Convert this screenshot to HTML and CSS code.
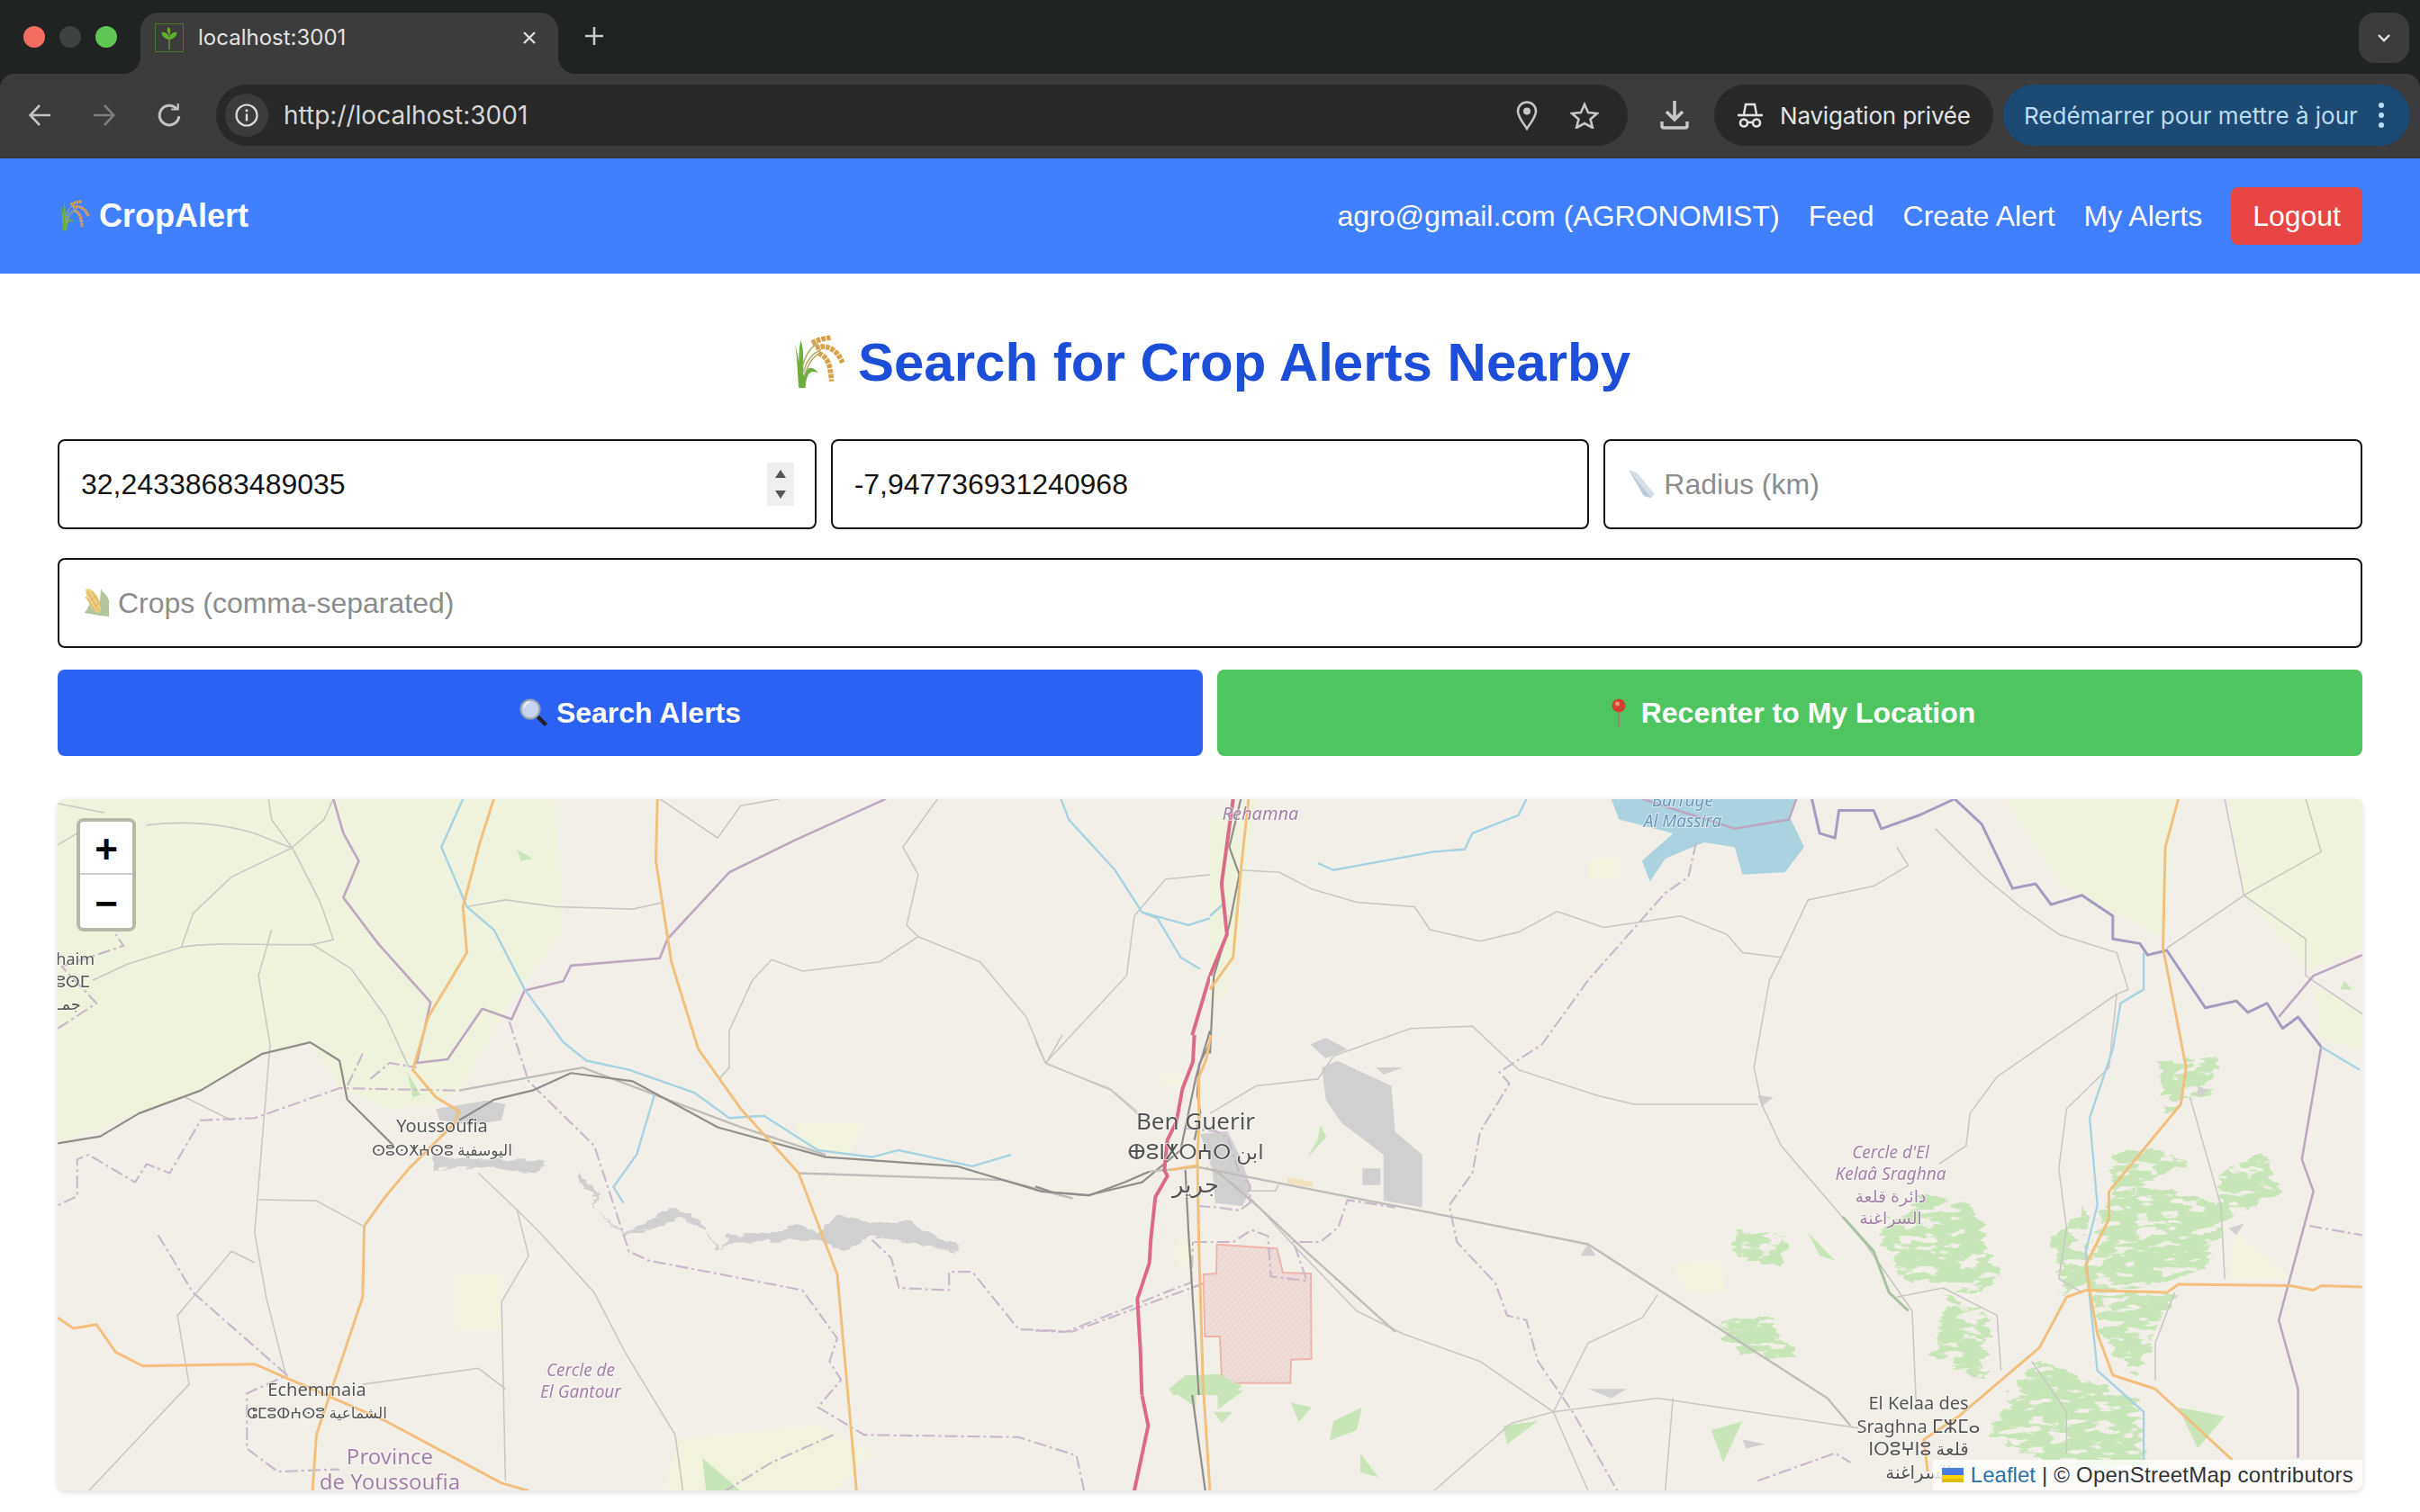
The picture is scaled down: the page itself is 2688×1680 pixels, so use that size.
FILE: index.html
```html
<!DOCTYPE html>
<html lang="en">
<head>
<meta charset="utf-8">
<title>CropAlert</title>
<link rel="stylesheet" href="styles.css">
</head>
<body>
<svg class="sprite" aria-hidden="true">
  <symbol id="rice" viewBox="0 0 60 60">
    <path d="M3 2C9 15 8 40 10 57L17 57C18 45 20 36 31 41C22 30 17 38 15 44C14 30 16 15 12 6C10 14 10 24 10 30C9 20 6 10 3 2Z" fill="#6fae3c"/>
    <path d="M14 34C16 24 22 14 30 9M15 40C18 28 24 20 34 16M16 44C19 34 24 24 32 20" fill="none" stroke="#b5b070" stroke-width="1.6"/>
    <path d="M24 9C31 5 38 4 44 3M28 14C36 11 44 13 50 19C53 22 55 26 57 30M31 20C37 22 41 27 43 34C44 40 45 45 45 50" fill="none" stroke="#d8a24c" stroke-width="5.5" stroke-dasharray="4.5 1"/>
  </symbol>
</svg>

<div class="browser">
  <div class="tabstrip">
    <div class="lights"><i class="light red"></i><i class="light grey"></i><i class="light green"></i></div>
    <div class="tab">
      <span class="favicon">
        <svg viewBox="0 0 32 32" width="30" height="30"><path d="M16 30V10" stroke="#6fae3c" stroke-width="1.2"/><path d="M16 18C9 17 7 13 7 9C12 9 16 12 16 18ZM16 18C23 17 25 13 25 9C20 9 16 12 16 18ZM16 12C13 9 13 6 15 3C18 6 18 9 16 12Z" fill="#5fb32c"/></svg>
      </span>
      <span class="tab-title">localhost:3001</span>
      <svg class="tab-close" viewBox="0 0 16 16" width="16" height="16"><path d="M2 2L14 14M14 2L2 14" stroke="#dcdcdc" stroke-width="2.4"/></svg>
    </div>
    <svg class="new-tab" viewBox="0 0 24 24" width="24" height="24"><path d="M12 2V22M2 12H22" stroke="#c8c8c8" stroke-width="2.6"/></svg>
    <div class="tab-menu"><svg viewBox="0 0 16 10" width="16" height="10"><path d="M2 2L8 8L14 2" fill="none" stroke="#e3e3e3" stroke-width="2.4"/></svg></div>
  </div>
  <div class="toolbar">
    <span class="navbtn"><svg viewBox="0 0 24 24" width="24" height="24"><path d="M24 12H2M12 1L1.500 12L12 23" fill="none" stroke="#c4c4c4" stroke-width="2.600"/></svg></span>
    <span class="navbtn"><svg viewBox="0 0 24 24" width="24" height="24"><path d="M0 12H22M12 1L22.500 12L12 23" fill="none" stroke="#7d7d7d" stroke-width="2.600"/></svg></span>
    <span class="navbtn"><svg viewBox="0 0 24 24" width="26" height="26"><path d="M20 6A10 10 0 1 0 22 13" fill="none" stroke="#c4c4c4" stroke-width="2.800"/><path d="M14 7H22V0H20V5H14Z" fill="#c4c4c4"/></svg></span>
    <div class="omnibox">
      <span class="chip"><svg viewBox="0 0 26 26" width="26" height="26"><circle cx="13" cy="13" r="11.500" fill="none" stroke="#dcdcdc" stroke-width="2.200"/><path d="M13 11.500V19.500" stroke="#dcdcdc" stroke-width="2.400"/><circle cx="13" cy="7.800" r="1.600" fill="#dcdcdc"/></svg></span>
      <span class="url">http://localhost:3001</span>
      <svg class="pin-ico" viewBox="0 0 24 34" width="24" height="34"><path d="M12 32C7 24 2 19 2 12.500A10 10 0 0 1 22 12.500C22 19 17 24 12 32Z" fill="none" stroke="#c6c6c6" stroke-width="2.600"/><circle cx="12" cy="12.500" r="4" fill="#c6c6c6"/></svg>
      <svg class="star-ico" viewBox="0 0 32 30" width="32" height="30"><path d="M16 3L20 12L30 13L22.500 19.500L25 29L16 24L7 29L9.500 19.500L2 13L12 12Z" fill="none" stroke="#c6c6c6" stroke-width="2.600"/></svg>
    </div>
    <svg class="dl-ico" viewBox="0 0 32 32" width="32" height="32"><path d="M16 0V20M7 12L16 21L25 12" fill="none" stroke="#c8c8c8" stroke-width="3.600"/><path d="M2 23V28Q2 30 4 30H28Q30 30 30 28V23" fill="none" stroke="#c8c8c8" stroke-width="3.400"/></svg>
    <div class="pill incognito">
      <svg viewBox="0 0 28 28" width="28" height="28"><path d="M7 13L9 2H19L21 13" fill="none" stroke="#e3e3e3" stroke-width="2.400"/><path d="M0 14H28" stroke="#e3e3e3" stroke-width="2.600"/><circle cx="7" cy="22.500" r="4" fill="none" stroke="#e3e3e3" stroke-width="2.600"/><circle cx="21" cy="22.500" r="4" fill="none" stroke="#e3e3e3" stroke-width="2.600"/><path d="M11 22H17" stroke="#e3e3e3" stroke-width="2.400"/></svg>
      <span>Navigation privée</span>
    </div>
    <div class="pill update">
      <span>Redémarrer pour mettre à jour</span>
      <span class="dots"><i></i><i></i><i></i></span>
    </div>
  </div>
</div>

<header class="site-header">
  <a class="brand"><svg class="brand-ico" width="36" height="36"><use href="#rice"/></svg>CropAlert</a>
  <nav class="nav">
    <span>agro@gmail.com (AGRONOMIST)</span>
    <a>Feed</a>
    <a>Create Alert</a>
    <a>My Alerts</a>
    <button class="logout">Logout</button>
  </nav>
</header>

<main class="page">
  <h1 class="title"><svg width="62" height="62"><use href="#rice"/></svg>Search for Crop Alerts Nearby</h1>

  <div class="fields-three">
    <div class="field">
      <input class="input" type="text" value="32,24338683489035">
      <span class="spinner"><i class="up"></i><i class="down"></i></span>
    </div>
    <div class="field"><input class="input" type="text" value="-7,947736931240968"></div>
    <div class="field">
      <input class="input with-icon" type="text" placeholder="Radius (km)">
      <svg class="ph-ico ruler" viewBox="0 0 34 32" width="34" height="32"><path d="M3 0L12 3L32 27L28 31L20 29Z" fill="#d5dfe8"/><path d="M3 0L20 29L28 31L6 4Z" fill="#bccad6"/></svg>
    </div>
  </div>

  <div class="field crops">
    <input class="input with-icon" type="text" placeholder="Crops (comma-separated)">
    <svg class="ph-ico corn" viewBox="0 0 30 32" width="30" height="32"><path d="M20 1C22 5 27 8 29 14V32L19 31L2 28C6 22 8 18 8 16L18 28Z" fill="#a4bd8c"/><path d="M3 2C8 -1 16 6 19 16C21 22 20 26 18 28C12 28 4 16 3 2Z" fill="#ebc768"/><path d="M5 4L18 26M10 4L20 20M3 10L14 26M9 14L14 9M13 21L18 16" stroke="#cfa24a" stroke-width="1"/></svg>
  </div>

  <div class="actions">
    <button class="action primary">
      <svg viewBox="0 0 32 32" width="32" height="32"><path d="M17 20L28 31L31 28L20 17Z" fill="#222"/><circle cx="12" cy="12" r="10.500" fill="#c6d4f2" stroke="#9aa3ad" stroke-width="2.200"/><path d="M5 10A8 8 0 0 1 11 4" fill="none" stroke="#eef3fc" stroke-width="2"/></svg>
      <span>Search Alerts</span>
    </button>
    <button class="action success">
      <svg viewBox="-7 0 32 32" width="32" height="32"><path d="M9 12V32" stroke="#b57a6d" stroke-width="1.800"/><circle cx="9" cy="8" r="7.500" fill="#d0402e"/><circle cx="7.500" cy="6" r="2.500" fill="#f0907e"/></svg>
      <span>Recenter to My Location</span>
    </button>
  </div>

  <section class="map">
    <svg class="map-art" viewBox="0 0 2560 768" width="2560" height="768">
      <defs>
        <pattern id="hatch" width="14" height="14" patternUnits="userSpaceOnUse" patternTransform="rotate(45)">
          <rect width="14" height="14" fill="#ecdfdb"/><rect width="3" height="14" fill="#f1cdc7"/>
        </pattern>
        <filter id="blotchy" x="-10%" y="-10%" width="120%" height="120%" color-interpolation-filters="sRGB">
          <feTurbulence type="fractalNoise" baseFrequency=".035 .06" numOctaves="3" seed="4" result="n"/>
          <feDisplacementMap in="SourceGraphic" in2="n" scale="34" xChannelSelector="R" yChannelSelector="G" result="d"/>
          <feColorMatrix in="n" type="matrix" values="0 0 0 0 0  0 0 0 0 0  0 0 0 0 0  0 0 0 -14 8.900" result="m"/>
          <feComposite in="d" in2="m" operator="in"/>
        </filter>
        <filter id="ragged" x="-10%" y="-20%" width="120%" height="140%" color-interpolation-filters="sRGB">
          <feTurbulence type="fractalNoise" baseFrequency=".06 .09" numOctaves="2" seed="9" result="n"/>
          <feDisplacementMap in="SourceGraphic" in2="n" scale="16" xChannelSelector="R" yChannelSelector="G"/>
        </filter>
      </defs>
      <rect class="land" width="2560" height="768"/>

      <!-- west half -->
      <g transform="translate(-64,-8) scale(.8571,.5102)">
        <path class="meadow" d="M75 15H720L730 300L660 460L600 640L565 680L500 690L440 640L402 545L340 570L260 650L180 700L75 765Z"/>
        <path class="meadow faint" d="M590 1050L650 1050L650 1170L590 1170ZM880 1410L1060 1380L1130 1440L1080 1522H860ZM1030 720H1120L1100 790L1040 770Z"/>
        <path class="wood" d="M910 1450L960 1522H915ZM670 125L690 145L675 150ZM528 610L545 660L535 665ZM1515 1300L1550 1285L1550 1340Z"/>
        <path class="urban rag" d="M750 830L775 870L770 910L810 960L870 905L905 930L935 1000L945 965L1010 960L1030 940L1060 960L1085 920L1130 940L1180 935L1205 965L1240 985L1238 1003L1190 985L1130 965L1095 1000L1060 975L1020 975L945 985L930 1000L915 955L880 925L850 950L810 965L780 925L768 905L770 880L750 850Z"/>
        <path class="urban" d="M565 690L630 672L655 680L650 715L610 725L570 715Z"/>
        <path class="urban rag" d="M560 790L620 800L700 800L710 815L690 830L620 815L560 825Z"/>
        <path class="road" d="M190 72C240 62 290 70 330 90L378 122L420 60L432 15M348 15L352 60L380 125L415 240L432 322L405 332C340 335 280 325 235 338L165 375L120 410M235 338L250 265L300 185L378 122M352 300L335 400L350 550L330 960L345 1100L372 1280M405 332L455 385L500 490L530 600M75 115L100 90M75 25L135 45M240 665L300 715M335 888L410 890L470 945M620 830L670 910L700 960L770 1090L810 1220L875 1400L885 1522M300 1000L330 1025M300 1000L275 1050L230 1140L245 1290L115 1522M670 910L685 1010L650 1110L655 1500M470 1290L620 1255L655 1300M855 15L930 100L960 30L1010 15M605 250L655 235L720 250L820 255L860 240M1215 15L1170 120L1190 180L1175 290L1190 315L1140 370L1040 390L1000 365L975 410L945 520L945 600L932 625M1190 315L1270 370L1330 490L1355 590L1440 650L1480 710M1355 590L1460 400L1470 270L1510 190L1568 180"/>
        <path class="road heavy" d="M595 650L755 600L960 730L1070 790M1035 830L1300 845L1390 885"/>
        <path class="admin" d="M432 15L445 90L465 150L445 230L490 330L558 458L540 590L580 582L625 472L663 495L680 432L730 412L740 378L855 362L865 320L945 175L1030 105L1148 15"/>
        <path class="admin dash" d="M660 500L685 630L770 770L815 1000L840 1020L1040 1085L1085 1190L1075 1240L1090 1280L1060 1340L1120 1400L1320 1405L1395 1445L1405 1522M1130 975L1155 1015L1165 1080L1230 1085L1230 1045L1260 1045L1320 1170L1390 1175L1560 1070M590 650L440 645L330 710L260 715L220 830L190 810L175 850L115 790L100 800L100 880L75 900M205 965L250 1090L372 1270L320 1310L320 1430L360 1480L440 1475M470 570L450 640M480 625L505 590L540 600M75 515L125 460L80 380L160 335L150 310M1080 1400L1000 1460L940 1522"/>
        <path class="river" d="M1375 15L1385 60L1445 170L1480 262L1500 275L1530 360L1555 385M1480 262L1540 290L1568 275M600 15L572 120L605 250L640 300L680 430L730 545L760 585L815 605L900 655L945 710L990 705L1060 780L1130 795L1165 780L1260 815L1310 790M848 660L825 790L795 860L808 895"/>
        <path class="rail" d="M75 765L130 750L180 700L260 650L340 570L402 545L440 585L450 670L510 770M595 715L640 670L690 650L740 612L820 630L930 730L1070 795L1240 815L1350 870L1410 878L1480 850L1530 780M1568 520L1550 620L1530 780M1545 1313L1562 1522"/>
        <path class="major" d="M640 15L622 110L600 250L605 350L555 490L535 605L565 665L595 695L590 720L530 820L500 880L472 945L470 1100L410 1400L405 1522M852 15L850 150L870 370L905 560L960 690L1035 830L1085 1050L1110 1522M75 1145L95 1168L125 1160L150 1220L185 1250L330 1246L500 1370L650 1505L685 1522M1560 1313L1568 1522"/>
        <path class="trunk" d="M1568 400L1545 530M1480 1314L1488 1380L1470 1522"/>
      </g>

      <!-- east half -->
      <g transform="translate(1280,-8) scale(.8571,.5102)">
        <path class="meadow" d="M1030 15H1250L1238 320L1100 200ZM1320 15H1493V340L1425 390L1340 225ZM1430 420L1493 480V560L1440 540ZM0 60L60 15L40 300L20 450H0Z"/>
        <path class="meadow faint" d="M1330 960L1400 1060L1320 1060ZM600 1030L660 1020L670 1090L620 1090ZM490 150L530 140L530 190L490 190Z"/>
        <path class="lake" d="M520 15H760L750 50L770 120L745 175L690 180L680 120L640 110L590 145L570 195L560 150L600 90L530 60Z"/>
        <path class="urban" d="M145 600L165 585L235 640L240 740L275 790L275 905L225 890L225 790L170 720L150 670ZM130 550L150 535L178 560L150 580ZM215 600L250 600L225 615Z"/>
        <path class="wood blot" d="M870 960L930 870L990 900L1020 1040L1000 1090L900 1060ZM1090 980L1130 900L1150 1060L1110 1090ZM1160 900L1210 860L1320 900L1310 960L1290 1040L1210 1080L1140 1090ZM1310 830L1370 790L1385 870L1300 950ZM1145 1095L1250 1095L1225 1170L1200 1280L1165 1200ZM1070 1230L1200 1330L1210 1470L1100 1470L1010 1400L1040 1300ZM950 1100L1010 1140L1000 1280L940 1240ZM660 1150L720 1140L760 1230L690 1230ZM680 950L750 970L740 1030L680 1010ZM1230 590L1305 580L1300 650L1240 700ZM1170 790L1230 770L1265 810L1220 850L1170 890Z"/>
        <path class="wood" d="M1255 1340L1315 1360L1280 1430ZM10 1290L42 1305L10 1345ZM105 1330L132 1340L115 1372ZM160 1370L197 1340L190 1390L155 1412ZM195 1440L218 1492L195 1482ZM775 960L810 1020L790 1010ZM650 1390L690 1370L665 1460ZM380 1380L425 1370L385 1420ZM1470 410L1480 430L1465 430ZM5 1350L30 1350L15 1375Z"/>
        <path class="urban" d="M490 985L500 1010L480 1010ZM490 1300L540 1300L520 1320ZM690 1410L720 1420L695 1430ZM1320 950L1340 940L1330 965ZM710 660L730 665L715 685ZM1280 640L1295 650L1280 665Z"/>
        <path class="road" d="M40 170L90 175L130 210L190 240L265 250L285 300L350 325L400 305L450 260L510 295L610 270L670 310L690 350L740 360L725 410L705 600L715 680L740 770L850 985L910 1130L915 1330M890 120L905 160L860 205L775 235L740 360M160 575L260 515L340 510L400 605L500 660L550 680L710 680M0 700L60 640L140 625L160 575M50 880L110 990L190 1130L250 1180L350 1240L445 1350L490 1522M290 1522L390 1375L445 1350L580 1320L840 1385M580 1095L560 1145L490 1200L445 1350M600 1320L590 1522M945 810L980 770L985 700L1020 620L1175 440L1190 430L1175 350L1100 310L1050 250L1000 180L940 80M1175 440L1165 600L1110 690L1100 820L1110 950L1100 1060L1130 1090M1495 485L1420 400L1420 320L1340 225L1440 130L1420 15M1315 15L1340 225M1240 340L1340 225M1270 665L1310 900L1315 1060M1250 1090L1225 1200L1225 1280M890 1100L950 1080L1020 1140L1025 1260M1065 1240L1110 1350L1110 1440"/>
        <path class="road heavy" d="M240 901L490 985L800 1320L830 1380"/>
        <path class="road green-road" d="M820 925L860 1000L880 1090L905 1130"/>
        <path class="admin" d="M560 15L680 80L750 60L760 15M1493 355L1430 400L1385 490"/>
        <path class="admin blue-admin" d="M780 15L790 90L810 100L815 40L860 40L870 80L920 50L965 15L1000 70L1040 210L1070 200L1090 245L1130 225L1170 270L1170 320L1205 330L1215 355L1240 345L1290 470L1330 455L1345 480L1370 460L1390 515L1410 490L1440 555"/>
        <path class="admin" d="M1440 555L1415 800L1430 870L1385 1150L1410 1300L1410 1450"/>
        <path class="admin dash" d="M630 110L620 185L590 220L490 410L430 550L375 610L388 635L350 740L340 830L310 900L320 980L370 1070L385 1140L410 1150L425 1240L470 1350L528 1522M1425 945L1493 965M710 1500L810 1440L830 1460"/>
        <path class="river" d="M140 155L160 170L290 130L330 125L340 90L400 50L410 15M1210 350L1210 430L1180 460L1170 560L1140 710L1150 900L1135 1000L1140 1100L1150 1260L1210 1350L1210 1455M1440 555L1490 605M0 270L20 240"/>
        <path class="rail" d="M40 15L25 120L38 180L25 290L5 400L0 570"/>
        <path class="major" d="M50 15L40 170L30 360L0 430M1255 15L1238 120L1235 340L1265 600L1258 680L1165 870L1165 930L1135 1030L1140 1085L1150 1180L1170 1270L1225 1300L1325 1455M1135 1085L1240 1090L1255 1072L1400 1075L1430 1085L1440 1075L1493 1078M1135 1085L1110 1100L1075 1210L970 1360L925 1410L930 1480"/>
        <path class="trunk" d="M30 15L15 200L22 310L0 400"/>
      </g>

      <!-- Ben Guerir -->
      <g transform="translate(1086,262) scale(.3333)">
        <path class="meadow faint" d="M420 130H490V165H420ZM470 680H530V770H470Z"/>
        <path class="urban" d="M550 330L640 320L680 400L720 510L690 570L600 560L590 450ZM1090 445H1150V500H1090Z"/>
        <path class="landfill" d="M840 475L925 490L920 508L840 495Z"/>
        <path class="military" d="M605 698L805 712L825 792L918 795L920 1080L852 1082L850 1160L622 1160L615 1005L565 1005L560 798L603 795Z"/>
        <path class="wood" d="M500 1135L610 1130L690 1170L650 1200H460L445 1180ZM950 300L970 340L905 410L940 350Z"/>
        <path class="road" d="M0 20L35 95L250 180L340 255M35 95L90 0M570 440L700 520H800L810 500"/>
        <path class="road heavy" d="M380 455L540 440L1200 570M600 450L740 570L900 720L1200 990"/>
        <path class="admin dash" d="M540 570L610 575L680 585L715 560L715 500L680 460L640 340L600 320L490 310M530 690H660L720 650L775 670L785 805L905 820L860 690H950L1010 640L1040 550L1200 575M0 985L100 990L330 900L440 855L520 825L525 690"/>
        <path class="rail" d="M0 505L60 525L180 535L300 490L380 455M580 30L545 100L540 200L550 260L530 350M500 450L510 650L545 1200"/>
        <path class="major" d="M585 0L570 80L545 140L545 300L540 420L545 700L560 1200M450 450L540 435"/>
        <path class="trunk" d="M530 0L525 90L490 180L470 290L440 350L430 450L440 470L400 540L385 680L380 760L340 880L350 1050L355 1200"/>
      </g>

      <g class="labels">
        <text class="place" x="427" y="370">Youssoufia</text>
        <text class="place small" x="427" y="396">ⵙⵓⵙⵅⵄⵙⵓ اليوسفية</text>
        <text class="place big" x="1264" y="367">Ben Guerir</text>
        <text class="place mid" x="1264" y="400">ⴲⵓⵏⵅⵔⵄⵔ ابن</text>
        <text class="place big" x="1264" y="437">جرير</text>
        <text class="place" x="288" y="663">Echemmaia</text>
        <text class="place small" x="288" y="688">ⵛⵎⵓⵀⵄⵙⵓ الشماعية</text>
        <text class="place" x="2067" y="678">El Kelaa des</text>
        <text class="place" x="2067" y="704">Sraghna ⵎⵣⵎⴰ</text>
        <text class="place" x="2067" y="729">ⵏⵔⵓⵖⵏⵓ قلعة</text>
        <text class="place" x="2067" y="755">السراغنة</text>
        <text class="end" x="41" y="184">haim</text>
        <text class="end" x="36" y="209">ⴽⵓⵙⵎ</text>
        <text class="end" x="26" y="234">جمـ</text>
        <text class="region italic" x="581" y="641">Cercle de</text>
        <text class="region italic" x="581" y="665">El Gantour</text>
        <text class="region large" x="369" y="739">Province</text>
        <text class="region large" x="369" y="767">de Youssoufia</text>
        <text class="region italic tiny" x="1336" y="23">Rehamna</text>
        <text class="region italic" x="2036" y="399">Cercle d'El</text>
        <text class="region italic" x="2036" y="423">Kelaâ Sraghna</text>
        <text class="region" x="2036" y="448">دائرة قلعة</text>
        <text class="region" x="2036" y="472">السراغنة</text>
        <text class="water" x="1805" y="8">Barrage</text>
        <text class="water" x="1805" y="31">Al Massira</text>
      </g>
    </svg>

    <div class="zoom-control">
      <button class="zoom-btn">+</button>
      <button class="zoom-btn">−</button>
    </div>

    <div class="attribution">
      <svg class="ua-flag" viewBox="0 0 24 16" width="24" height="16"><rect width="24" height="8" fill="#4c7be1"/><rect y="8" width="24" height="4" fill="#ffd500"/><rect y="12" width="24" height="4" fill="#e0bc00"/></svg>
      <a class="leaflet-link">Leaflet</a>
      <span class="sep">|</span>
      <span class="credit">© OpenStreetMap contributors</span>
    </div>
  </section>
</main>
</body>
</html>
```
FILE: styles.css
```css
* { box-sizing: border-box; }

html, body {
  margin: 0;
  height: 1680px;
  overflow: hidden;
  background: #fff;
  font-family: "Liberation Sans", Arial, sans-serif;
}

.sprite { display: none; }

/* browser chrome */
.browser { font-family: Inter, "Liberation Sans", sans-serif; background: #202322; }

.tabstrip { height: 82px; display: flex; align-items: flex-start; padding-left: 26px; }

.lights { display: flex; gap: 16px; margin-top: 29px; }
.light { display: block; width: 24px; height: 24px; border-radius: 50%; }
.red { background: #f26d60; }
.grey { background: #3f4241; }
.green { background: #5fc655; }

.tab {
  position: relative;
  width: 464px;
  height: 68px;
  margin: 14px 0 0 26px;
  padding: 0 24px 13px 16px;
  display: flex;
  align-items: center;
  background: #3c3c3c;
  border-radius: 20px 20px 0 0;
}
.tab::before, .tab::after {
  content: "";
  position: absolute;
  bottom: 0;
  width: 20px;
  height: 20px;
}
.tab::before { left: -20px; background: radial-gradient(circle at 0 0, transparent 20px, #3c3c3c 20.5px); }
.tab::after { right: -20px; background: radial-gradient(circle at 100% 0, transparent 20px, #3c3c3c 20.5px); }

.favicon {
  width: 32px;
  height: 32px;
  border: 1px solid #4b7a2a;
  display: flex;
  margin-right: 16px;
}
.tab-title { font-size: 24px; color: #e3e3e3; flex: 1; }

.new-tab { margin: 28px 0 0 28px; }

.tab-menu {
  margin: 14px 12px 0 auto;
  width: 56px;
  height: 56px;
  border-radius: 18px;
  background: #3c3c3c;
  display: flex;
  align-items: center;
  justify-content: center;
}

.toolbar {
  height: 94px;
  padding: 12px 0 12px 8px;
  display: flex;
  align-items: flex-start;
  background: #3c3c3c;
  border-radius: 16px 16px 0 0;
  border-bottom: 2px solid #363636;
}

.navbtn { width: 72px; height: 68px; display: flex; align-items: center; justify-content: center; }

.omnibox {
  width: 1568px;
  height: 68px;
  margin-left: 16px;
  padding: 0 32px 0 10px;
  display: flex;
  align-items: center;
  background: #282828;
  border-radius: 34px;
}
.chip {
  width: 48px;
  height: 48px;
  border-radius: 50%;
  background: #3c3c3c;
  display: flex;
  align-items: center;
  justify-content: center;
  margin-right: 17px;
}
.url { flex: 1; font-size: 28px; color: #d6d6d6; }
.star-ico { margin-left: 36px; }

.dl-ico { margin: 18px 28px 0 36px; }

.pill {
  height: 68px;
  border-radius: 34px;
  display: flex;
  align-items: center;
  font-size: 26px;
}
.incognito { width: 310px; padding-left: 26px; gap: 19px; background: #282828; color: #e3e3e3; letter-spacing: -.2px; }
.update { width: 452px; margin-left: 11px; padding-left: 23px; background: #1b4a75; color: #bcdcf3; }

.dots { display: flex; flex-direction: column; gap: 5px; margin-left: 23px; }
.dots i { display: block; width: 6px; height: 6px; border-radius: 50%; background: #bcdcf3; }

/* site header */
.site-header {
  height: 128px;
  padding: 0 64px;
  display: flex;
  align-items: center;
  justify-content: space-between;
  background: #4080fe;
  color: #fff;
}
.brand { display: flex; align-items: center; gap: 10px; font-size: 36px; font-weight: 700; }
.nav { display: flex; align-items: center; gap: 32px; font-size: 32px; }
.logout {
  height: 64px;
  padding: 0 24px;
  border: 0;
  border-radius: 8px;
  background: #e84545;
  color: #fff;
  font: inherit;
}

/* page */
.page { padding: 64px 64px 24px; }

.title {
  margin: 0 0 48px;
  height: 72px;
  padding-bottom: 3px;
  display: flex;
  align-items: center;
  justify-content: center;
  gap: 14px;
  font-size: 60px;
  font-weight: 700;
  color: #1d4ed8;
}

.fields-three {
  display: grid;
  grid-template-columns: repeat(3, 1fr);
  gap: 16px;
  margin-bottom: 32px;
}
.crops { margin-bottom: 24px; }
.field { position: relative; }

.input {
  display: block;
  width: 100%;
  height: 100px;
  padding: 0 24px;
  border: 2px solid #141414;
  border-radius: 8px;
  background: #fff;
  color: #141414;
  font: 32px "Liberation Sans", Arial, sans-serif;
  outline: none;
}
.input::placeholder { color: #8c8c8c; opacity: 1; }
.with-icon { padding-left: 65px; }

.ph-ico { position: absolute; }
.ruler { left: 25px; top: 34px; }
.corn { left: 28px; top: 33px; opacity: .85; }

.spinner {
  position: absolute;
  top: 26px;
  right: 25px;
  width: 30px;
  height: 48px;
  background: #efefef;
  display: flex;
  flex-direction: column;
  align-items: center;
  justify-content: center;
  gap: 14px;
}
.spinner i { display: block; width: 0; height: 0; border-left: 6px solid transparent; border-right: 6px solid transparent; }
.spinner .up { border-bottom: 9px solid #555; }
.spinner .down { border-top: 9px solid #555; }

.actions {
  display: grid;
  grid-template-columns: 1fr 1fr;
  gap: 16px;
  margin-bottom: 48px;
}
.action {
  height: 96px;
  border: 0;
  border-radius: 8px;
  display: flex;
  align-items: center;
  justify-content: center;
  gap: 9px;
  color: #fff;
  font: 700 32px "Liberation Sans", Arial, sans-serif;
}
.primary { background: #2b62f3; }
.success { background: #4fc561; }

/* map */
.map {
  position: relative;
  height: 768px;
  overflow: hidden;
  border-radius: 8px;
  box-shadow: 0 2px 6px rgba(0, 0, 0, .14);
  background: #f2efe9;
}
.map-art { display: block; filter: blur(.6px); }

.land { fill: #f2efe9; }
.meadow { fill: #eff2dd; }
.meadow.faint { fill: #f1f3de; }
.wood { fill: #c7e5b6; }
.wood.blot { filter: url(#blotchy); }
.urban { fill: #d1d0d1; }
.urban.rag { filter: url(#ragged); }
.landfill { fill: #f3e0bd; }
.lake { fill: #aad3df; }
.military { fill: url(#hatch); stroke: #eeb3aa; stroke-width: 6; }

.road, .admin, .river, .rail, .major, .trunk {
  fill: none;
  vector-effect: non-scaling-stroke;
  stroke-linejoin: round;
}
.road { stroke: #c9c7c3; stroke-width: 1.6px; }
.road.heavy { stroke: #bfbdb9; stroke-width: 2.4px; }
.road.green-road { stroke: #a7c39f; stroke-width: 3px; }
.admin { stroke: #bda6c0; stroke-width: 2.6px; }
.admin.dash { stroke: #c9b8cb; stroke-width: 2.2px; stroke-dasharray: 14 4 3 4; }
.admin.blue-admin { stroke: #a49cc0; stroke-width: 3px; }
.river { stroke: #a6d2e2; stroke-width: 2.4px; }
.rail { stroke: #8f8e8a; stroke-width: 2.2px; }
.major { stroke: #f2bf7c; stroke-width: 3px; }
.trunk { stroke: #dc6a86; stroke-width: 4px; }

.labels text {
  font-family: "Noto Sans", "DejaVu Sans", sans-serif;
  text-anchor: middle;
  paint-order: stroke;
  stroke: rgba(255, 255, 255, .55);
  stroke-width: 2px;
}
.place { font-size: 20px; fill: #555; }
.place.small { font-size: 17px; }
.place.mid { font-size: 23px; }
.place.big { font-size: 26px; }
.labels .end { font-size: 18px; fill: #555; text-anchor: end; }
.region { font-size: 19px; fill: #a482a8; }
.region.italic { font-style: italic; }
.region.large { font-size: 24px; }
.region.tiny { font-size: 20px; }
.water { font-size: 19px; font-style: italic; fill: #6c99b8; }

.zoom-control {
  position: absolute;
  top: 21px;
  left: 21px;
  width: 66px;
  display: flex;
  flex-direction: column;
  border: 4px solid rgba(0, 0, 0, .24);
  border-radius: 8px;
  background-clip: padding-box;
}
.zoom-btn {
  height: 59px;
  padding: 4px 0 0;
  border: 0;
  background: #fff;
  color: #000;
  font: 700 44px "Liberation Sans", Arial, sans-serif;
  line-height: 50px;
}
.zoom-btn:first-child { border-bottom: 2px solid #ccc; border-radius: 4px 4px 0 0; }
.zoom-btn:last-child { border-radius: 0 0 4px 4px; }

.attribution {
  position: absolute;
  right: 0;
  bottom: 0;
  height: 34px;
  padding: 0 10px;
  display: flex;
  align-items: center;
  gap: 7px;
  background: rgba(255, 255, 255, .8);
  color: #333;
  font-size: 24px;
}
.leaflet-link { color: #2a72a8; }
.credit { letter-spacing: .25px; }
.ua-flag { margin-right: 1px; }
```
